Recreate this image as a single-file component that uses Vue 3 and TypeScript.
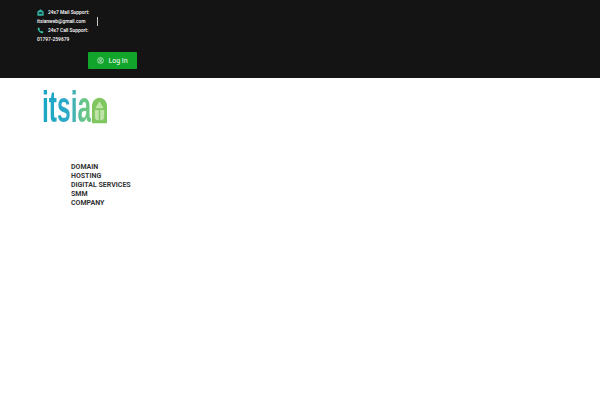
<template>
  <div class="page">
    <header class="topbar">
      <div class="contact">
        <div class="contact__list">
          <div class="contact__label">
            <svg class="contact__icon" viewBox="0 0 10 10" aria-hidden="true">
              <path d="M.5 3.500 5 .5l4.500 3V9.500H.5z" fill="#2fb3a3" />
              <path d="M2.500 4.500h5v2.500h-5z" fill="#0f3f3a" />
            </svg>
            <span>24x7 Mail Support:</span>
          </div>
          <div class="contact__value">itsianweb@gmail.com</div>
          <div class="contact__label">
            <svg class="contact__icon" viewBox="0 0 10 10" aria-hidden="true">
              <path
                d="M1.500 1.200 3.300.900l.9 2.200-1 .8c.5 1.200 1.400 2.100 2.700 2.700l.8-1 2.200.9-.3 1.900c-.1.300-.4.500-.7.500C4.300 8.800 1 5.500 1 1.900c0-.3.200-.6.500-.7z"
                fill="#2fc6a8" />
            </svg>
            <span>24x7 Call Support:</span>
          </div>
          <div class="contact__value">01797-259679</div>
        </div>
        <span class="contact__rule"></span>
      </div>
      <button class="login" type="button">
        <svg class="login__icon" viewBox="0 0 12 12" aria-hidden="true">
          <circle cx="6" cy="6" r="5" />
          <circle cx="6" cy="4.800" r="1.700" />
          <path d="M2.800 9.700C3.500 8.400 4.600 7.900 6 7.900s2.500.5 3.200 1.800" />
        </svg>
        Log In
      </button>
    </header>

    <div class="brand">
      <span class="brand__box"><span class="brand__name">itsia</span></span>
      <svg class="brand__mark" viewBox="0 0 16 27" aria-hidden="true">
        <path d="M0 27V9C0 4 3.500 0 8 0s8 4 8 9v18z" fill="#7fc65e" />
        <path d="M3 13h4.300v11c-2.400 0-4.300-1-4.300-3zM8.700 13H13v8c0 2-1.900 3-4.300 3z" fill="#bfe3a8" />
        <path d="M8 3.500 12.500 11h-9z" fill="#bfe3a8" />
      </svg>
    </div>

    <nav class="menu">
      <a v-for="item in items" :key="item" class="menu__item">{{ item }}</a>
    </nav>
  </div>
</template>

<script setup lang="ts">
const items: string[] = ['DOMAIN', 'HOSTING', 'DIGITAL SERVICES', 'SMM', 'COMPANY']
</script>

<style>
html,
body {
  margin: 0;
  background: #fff;
}
</style>

<style scoped>
.page {
  width: 600px;
  height: 400px;
  overflow: hidden;
  font-family: Roboto, "Liberation Sans", sans-serif;
}

.topbar {
  box-sizing: border-box;
  height: 78px;
  padding: 8px 0 0 37px;
  background: #141414;
}

.contact {
  display: flex;
  gap: 8px;
  height: 38px;
  color: #fff;
  font-size: 4.900px;
  font-weight: 500;
  line-height: 8.900px;
}

.contact__label {
  display: flex;
  align-items: center;
  gap: 4px;
}

.contact__icon {
  width: 7px;
  height: 7px;
}

.contact__rule {
  width: 1px;
  height: 9px;
  margin-top: 9px;
  background: #c8c8c8;
}

.login {
  display: flex;
  align-items: center;
  justify-content: center;
  gap: 4px;
  width: 49px;
  height: 17px;
  margin: 6px 0 0 51px;
  padding: 0;
  border: 0;
  border-radius: 1px;
  background: #12a52c;
  color: #fff;
  font-family: Roboto, "Liberation Sans", sans-serif;
  font-size: 7px;
  font-weight: 400;
}

.login__icon {
  width: 7px;
  height: 7px;
  fill: none;
  stroke: #fff;
  stroke-width: 1;
}

.brand {
  display: flex;
  align-items: flex-end;
  height: 34px;
  margin: 12px 0 0 42px;
}

.brand__box {
  width: 50px;
  height: 34px;
}

.brand__name {
  display: inline-block;
  font-family: "Liberation Sans", sans-serif;
  font-size: 44px;
  font-weight: 700;
  line-height: 34px;
  white-space: nowrap;
  transform: scaleX(0.56);
  transform-origin: left center;
  background: linear-gradient(90deg, #17a7c4, #2fa9c8 55%, #6cc785 85%);
  -webkit-background-clip: text;
  background-clip: text;
  color: transparent;
}

.brand__mark {
  width: 15px;
  height: 27px;
}

.menu {
  display: flex;
  flex-direction: column;
  margin: 39px 0 0 71px;
}

.menu__item {
  color: #333;
  font-size: 7px;
  font-weight: 700;
  line-height: 9px;
}
</style>
